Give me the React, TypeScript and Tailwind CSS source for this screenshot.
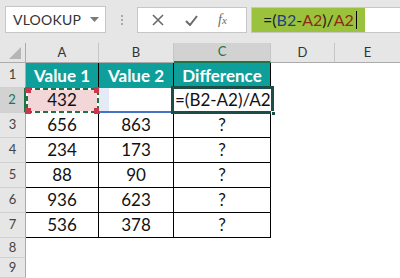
import React from "react";

function RowHead({ label, h, selected }: { label: string; h: string; selected?: boolean }) {
  return (
    <div
      className={
        "w-[26px] shrink-0 flex items-center justify-center text-[13px] border-b border-[#d0d0d0] " +
        h +
        " " +
        (selected
          ? "bg-[#d2d2d2] text-[#217346] border-r-2 border-r-[#217346]"
          : "bg-[#e6e6e6] text-[#444] border-r border-r-[#ababab]")
      }
    >
      {label}
    </div>
  );
}

function DataRow({ n, a, b }: { n: string; a: string; b: string }) {
  return (
    <div className="flex h-[25px]">
      <RowHead label={n} h="h-[25px]" />
      <div className="w-[73px] h-[25px] border-r border-b border-black flex items-center justify-center text-[17px] text-[#111]">{a}</div>
      <div className="w-[75px] h-[25px] border-r border-b border-black flex items-center justify-center text-[17px] text-[#111]">{b}</div>
      <div className="w-[97px] h-[25px] border-r border-b border-black flex items-center justify-center text-[17px] text-[#111]">?</div>
    </div>
  );
}

export default function App() {
  return (
    <div className="w-[400px] h-[278px] overflow-hidden bg-white font-['Lato',sans-serif]">
      {/* toolbar */}
      <div className="h-[43px] bg-[#e6e6e6] flex items-start pt-[6px]">
        <div className="ml-[5px] w-[101px] h-[27px] bg-white border border-[#c6c6c6] flex items-center justify-between pl-[7px] pr-[6px]">
          <span className="text-[14px] text-[#333] tracking-[0.2px]">VLOOKUP</span>
          <svg width="9" height="5" viewBox="0 0 9 5">
            <path d="M0 0h9L4.5 5z" fill="#7a7a7a" />
          </svg>
        </div>
        <div className="w-[31px] h-[27px] flex flex-col items-center justify-center gap-[2px]">
          <div className="w-[2px] h-[2px] bg-[#aaa]" />
          <div className="w-[2px] h-[2px] bg-[#aaa]" />
          <div className="w-[2px] h-[2px] bg-[#aaa]" />
        </div>
        <div className="mt-[1px] w-[110px] h-[26px] bg-white border border-[#c6c6c6] flex items-center">
          <svg width="12" height="12" viewBox="0 0 12 12" className="ml-[14px]">
            <path d="M1 1L11 11M11 1L1 11" stroke="#6a6a6a" strokeWidth="1.6" />
          </svg>
          <svg width="13" height="11" viewBox="0 0 13 11" className="ml-[21px]">
            <path d="M1 6L5 10L12 1" stroke="#6a6a6a" strokeWidth="2" fill="none" />
          </svg>
          <span className="ml-[20px] italic font-['Liberation_Serif',serif] text-[14px] text-[#6a6a6a] leading-none">
            f<span className="text-[11px]">x</span>
          </span>
        </div>
        <div className="ml-[4px] mt-[1px] flex-1 h-[26px] bg-white border-y border-l border-[#c6c6c6] flex">
          <div className="w-[113px] h-full bg-[#9bc23c] flex items-center pl-[11px] text-[16px] text-[#1a1a1a]">
            <span>=(</span>
            <span className="text-[#1d3f8a]">B2</span>
            <span>-</span>
            <span className="text-[#8e2a16]">A2</span>
            <span>)/</span>
            <span className="text-[#8e2a16]">A2</span>
            <span className="ml-[2px] w-[1px] h-[18px] bg-black" />
          </div>
        </div>
      </div>

      {/* column headers */}
      <div className="flex h-[20px] text-[13px] text-[#333]">
        <div className="w-[26px] h-[20px] bg-[#e6e6e6] border-r border-b border-[#ababab] flex items-end justify-end pr-[4px] pb-[3px]">
          <svg width="12" height="12" viewBox="0 0 12 12">
            <path d="M12 0V12H0z" fill="#b5b5b5" />
          </svg>
        </div>
        <div className="w-[73px] h-[20px] bg-[#e6e6e6] border-r border-r-[#c6c6c6] border-b border-b-[#ababab] flex items-center justify-center">A</div>
        <div className="w-[75px] h-[20px] bg-[#e6e6e6] border-r border-r-[#c6c6c6] border-b border-b-[#ababab] flex items-center justify-center">B</div>
        <div className="w-[97px] h-[20px] bg-[#d2d2d2] border-r border-r-[#c6c6c6] border-b-2 border-b-[#217346] flex items-center justify-center text-[#217346]">C</div>
        <div className="w-[64px] h-[20px] bg-[#e6e6e6] border-r border-r-[#c6c6c6] border-b border-b-[#ababab] flex items-center justify-center">D</div>
        <div className="flex-1 h-[20px] bg-[#e6e6e6] border-b border-b-[#ababab] flex items-center justify-center">E</div>
      </div>

      {/* row 1 */}
      <div className="flex h-[25px]">
        <RowHead label="1" h="h-[25px]" />
        <div className="w-[73px] h-[25px] bg-[#0e9f9b] border-r border-black flex items-center justify-center text-[17px] font-bold text-white">Value 1</div>
        <div className="w-[75px] h-[25px] bg-[#0e9f9b] border-r border-black flex items-center justify-center text-[17px] font-bold text-white">Value 2</div>
        <div className="w-[97px] h-[25px] bg-[#0e9f9b] border-r border-black flex items-center justify-center text-[17px] font-bold text-white">Difference</div>
      </div>

      {/* row 2 */}
      <div className="flex h-[25px]">
        <RowHead label="2" h="h-[25px]" selected />
        <div className="relative w-[73px] h-[25px] bg-[#f3d6d7] border-r border-b border-black flex items-center justify-center text-[17px] text-[#111]">
          432
          <svg className="absolute -left-[1px] -top-[1px]" width="75" height="27" viewBox="0 0 75 27">
            <rect x="2" y="2" width="71" height="23" fill="none" stroke="#ffffff" strokeWidth="2" />
            <rect x="2" y="2" width="71" height="23" fill="none" stroke="#217346" strokeWidth="2" strokeDasharray="5 3" />
            <rect x="0" y="0" width="6" height="6" fill="#c9374a" />
            <rect x="69" y="0" width="6" height="6" fill="#c9374a" />
            <rect x="0" y="21" width="6" height="6" fill="#c9374a" />
            <rect x="69" y="21" width="6" height="6" fill="#c9374a" />
          </svg>
        </div>
        <div className="relative w-[75px] h-[25px] bg-white border-r-2 border-b-2 border-[#4472c4] flex">
          <div className="w-[10px] h-full bg-[#e4eaf6]" />
        </div>
        <div className="relative w-[97px] h-[25px] border-b border-black flex items-center text-[17px] text-[#111] whitespace-nowrap">
          <span className="ml-[1px]">=(B2-A2)/A2</span>
          <div className="absolute -left-[3px] -top-[2px] -right-[3px] -bottom-[2px] border-[3px] border-[#1e4d48]" />
          <div className="absolute -right-[5px] -bottom-[4px] w-[5px] h-[5px] bg-[#1e4d48] border border-white" />
        </div>
      </div>

      <DataRow n="3" a="656" b="863" />
      <DataRow n="4" a="234" b="173" />
      <DataRow n="5" a="88" b="90" />
      <DataRow n="6" a="936" b="623" />
      <DataRow n="7" a="536" b="378" />
      <div className="flex h-[20px]">
        <RowHead label="8" h="h-[20px]" />
      </div>
      <div className="flex h-[20px]">
        <RowHead label="9" h="h-[20px]" />
      </div>
    </div>
  );
}
